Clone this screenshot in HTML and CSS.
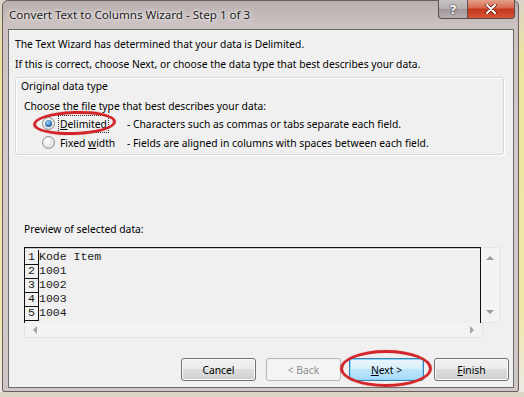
FILE: index.html
```html
<!DOCTYPE html>
<html lang="en">
<head>
  <meta charset="UTF-8" />
  <title>Convert Text to Columns Wizard</title>
  <link rel="stylesheet" href="styles.css">
</head>
<body>
  <div class="window">
    <div class="titlebar">
      <span class="title">Convert Text to Columns Wizard - Step 1 of 3</span>
      <div class="caption-btns">
        <span class="cap help">?</span>
        <span class="cap close">
          <svg width="12" height="10" viewBox="0 0 12 10">
            <path d="M2 1 L10 9 M10 1 L2 9" stroke="#5a1a10" stroke-width="3.4" stroke-linecap="round"/>
            <path d="M2 1 L10 9 M10 1 L2 9" stroke="#fff" stroke-width="2" stroke-linecap="round"/>
          </svg>
        </span>
      </div>
    </div>

    <div class="client">
      <p class="intro">The Text Wizard has determined that your data is Delimited.</p>
      <p class="intro">If this is correct, choose Next, or choose the data type that best describes your data.</p>

      <!-- Type de fichier -->
      <div class="group">
        <div class="group-label">Original data type</div>
        <div class="group-hint">Choose the file type that best describes your data:</div>
        <div class="option">
          <span class="radio checked"></span>
          <span class="opt-name"><span class="focus"><u>D</u>elimited</span></span>
          <span class="opt-desc">- Characters such as commas or tabs separate each field.</span>
        </div>
        <div class="option">
          <span class="radio"></span>
          <span class="opt-name">Fixed <u>w</u>idth</span>
          <span class="opt-desc">- Fields are aligned in columns with spaces between each field.</span>
        </div>
        <span class="mark mark-delimited"></span>
      </div>

      <!-- Apercu des donnees -->
      <div class="preview-label">Preview of selected data:</div>
      <div class="preview">
        <div class="preview-main">
          <div class="grid">
            <div class="row"><span class="num">1</span><span class="cell">Kode Item</span></div>
            <div class="row"><span class="num">2</span><span class="cell">1001</span></div>
            <div class="row"><span class="num">3</span><span class="cell">1002</span></div>
            <div class="row"><span class="num">4</span><span class="cell">1003</span></div>
            <div class="row"><span class="num">5</span><span class="cell">1004</span></div>
          </div>
          <div class="vscroll">
            <span class="arrow up"></span>
            <span class="arrow down"></span>
          </div>
        </div>
        <div class="hscroll">
          <span class="arrow left"></span>
          <span class="arrow right"></span>
        </div>
      </div>

      <!-- Boutons -->
      <div class="buttons">
        <button class="btn">Cancel</button>
        <button class="btn disabled">&lt; Back</button>
        <button class="btn default"><u>N</u>ext &gt;</button>
        <button class="btn"><u>F</u>inish</button>
        <span class="mark mark-next"></span>
      </div>
    </div>
  </div>
</body>
</html>
```

FILE: styles.css
```css
/* Fond derriere la fenetre */
body {
  margin: 0;
  background: linear-gradient(180deg, #d9d4c8 0%, #ece49e 15%, #efe7a8 80%, #ecebe6 100%);
  font-family: "Noto Sans", "Open Sans", sans-serif;
  font-size: 10.3px;
  color: #000;
}

/* Cadre de la fenetre */
.window {
  margin-left: 2px;
  width: 506px;
  border: 1px solid #6d5d5e;
  border-radius: 6px 6px 2px 2px;
  background: linear-gradient(180deg, #b9aeae 0%, #cbc1c1 6%, #d3cbcb 40%, #cfc6c6 100%);
  padding: 0 4px 3px 5px;
}

.titlebar {
  height: 28px;
  display: flex;
  align-items: flex-start;
  justify-content: space-between;
}

.title {
  margin-top: 6px;
  margin-left: 1px;
  font-size: 11.6px;
  color: #1b1b1b;
  text-shadow: 0 0 6px #fff, 0 0 3px #fff;
}

.caption-btns {
  display: flex;
  margin-top: -1px;
  margin-right: -1px;
}

.cap {
  height: 18px;
  display: flex;
  align-items: center;
  justify-content: center;
  border: 1px solid #5e4e4e;
  border-top: none;
}

.help {
  width: 28px;
  border-radius: 0 0 0 4px;
  border-right: none;
  background: linear-gradient(180deg, #c9c4c4 0%, #b5adad 50%, #9f9797 51%, #b8b0b0 100%);
  color: #fff;
  font-weight: bold;
  font-size: 13px;
  text-shadow: 0 0 2px #333, 0 0 1px #333;
}

.close {
  width: 46px;
  border-radius: 0 0 4px 0;
  background: linear-gradient(180deg, #e4a08c 0%, #d6684c 45%, #c2371a 50%, #d8553a 100%);
}

/* Zone client */
.client {
  border: 1px solid #6a6a6a;
  background: #f0f0f0;
  padding: 4px 9px 6px 6px;
}

.intro {
  margin: 0;
  line-height: 20px;
}

.group {
  position: relative;
  margin-top: 3px;
  border: 1px solid #d5dbe0;
  border-radius: 3px;
  box-shadow: inset 1px 1px 0 #fff, 1px 1px 0 #fff;
  padding: 0 0 2px 5px;
}

.group-label {
  line-height: 16px;
}

.group-hint {
  line-height: 16px;
  margin-top: 4px;
  padding-left: 3px;
}

.option {
  display: flex;
  align-items: center;
  height: 19px;
}

.radio {
  width: 11px;
  height: 11px;
  margin-left: 21px;
  margin-right: 5px;
  border: 1px solid #8e8f8f;
  border-radius: 50%;
  background: radial-gradient(circle at 40% 35%, #ffffff 0%, #e6e6e6 60%, #d0d0d0 100%);
  position: relative;
}

.radio.checked::after {
  content: "";
  position: absolute;
  left: 2px;
  top: 2px;
  width: 7px;
  height: 7px;
  border-radius: 50%;
  background: radial-gradient(circle at 40% 35%, #a6d4f2 0%, #2f76b8 55%, #1b4f8a 100%);
}

.opt-name {
  width: 67px;
}

.focus {
  outline: 1px dotted #333;
  outline-offset: 1px;
}

/* Cercles rouges */
.mark {
  position: absolute;
  border: 3px solid #d2262a;
  border-radius: 50%;
  box-shadow: 0 0 1px #e05050;
  pointer-events: none;
}

.mark-delimited {
  left: 17px;
  top: 33px;
  width: 77px;
  height: 18px;
  transform: rotate(-2deg);
}

.preview-label {
  margin-top: 66px;
  padding-left: 9px;
  line-height: 16px;
}

.preview {
  margin: 10px 0 0 9px;
  width: 476px;
}

.preview-main {
  display: flex;
  height: 76px;
}

.grid {
  flex: 1;
  border: 1px solid #111;
  border-bottom: none;
  box-shadow: inset 0 1px 0 #c9c9c9, inset 0 2px 0 #fafafa;
  padding-top: 2px;
  overflow: hidden;
  font-family: "Liberation Mono", monospace;
  font-size: 11.5px;
  color: #1a1a1a;
}

.row {
  display: flex;
  height: 14px;
  line-height: 14px;
}

.num {
  width: 14px;
  text-align: center;
  border-right: 1px solid #111;
  border-bottom: 1px solid #111;
  box-sizing: border-box;
  height: 15px;
}

.vscroll,
.hscroll {
  position: relative;
  background: #f3f3f3;
}

.vscroll {
  width: 18px;
  border: 1px solid #e6e6e6;
  border-left: none;
}

.hscroll {
  height: 14px;
  width: 457px;
  border: 1px solid #e6e6e6;
  border-top: none;
}

.arrow {
  position: absolute;
  width: 0;
  height: 0;
  border: 4px solid transparent;
}

.arrow.up {
  left: 5px;
  top: 4px;
  border-bottom: 4px solid #9a9a9a;
}

.arrow.down {
  left: 5px;
  bottom: 4px;
  border-top: 4px solid #9a9a9a;
}

.arrow.left {
  left: 4px;
  top: 3px;
  border-right: 4px solid #a4a4a4;
}

.arrow.right {
  right: 4px;
  top: 3px;
  border-left: 4px solid #a4a4a4;
}

/* Boutons */
.buttons {
  position: relative;
  display: flex;
  justify-content: flex-end;
  gap: 10px;
  margin-top: 20px;
  margin-right: -5px;
}

.btn {
  width: 75px;
  height: 23px;
  font-family: inherit;
  font-size: 10.3px;
  color: #000;
  border: 1px solid #707070;
  border-radius: 3px;
  background: linear-gradient(180deg, #f2f2f2 0%, #ebebeb 48%, #dddddd 50%, #cfcfcf 100%);
  box-shadow: inset 0 0 0 1px #fbfbfb;
  padding: 0;
}

.btn.disabled {
  color: #8d8d8d;
  border-color: #b5b5b5;
  background: #f4f4f4;
  box-shadow: none;
}

.btn.default {
  margin-left: -2px;
  border-color: #3c7fb1;
  background: linear-gradient(180deg, #eaf6fd 0%, #d9f0fc 48%, #bee6fd 50%, #a7d9f5 100%);
  box-shadow: inset 0 0 0 1px #8fd7f7;
}

.mark-next {
  left: 325px;
  top: -8px;
  width: 86px;
  height: 31px;
}
```
